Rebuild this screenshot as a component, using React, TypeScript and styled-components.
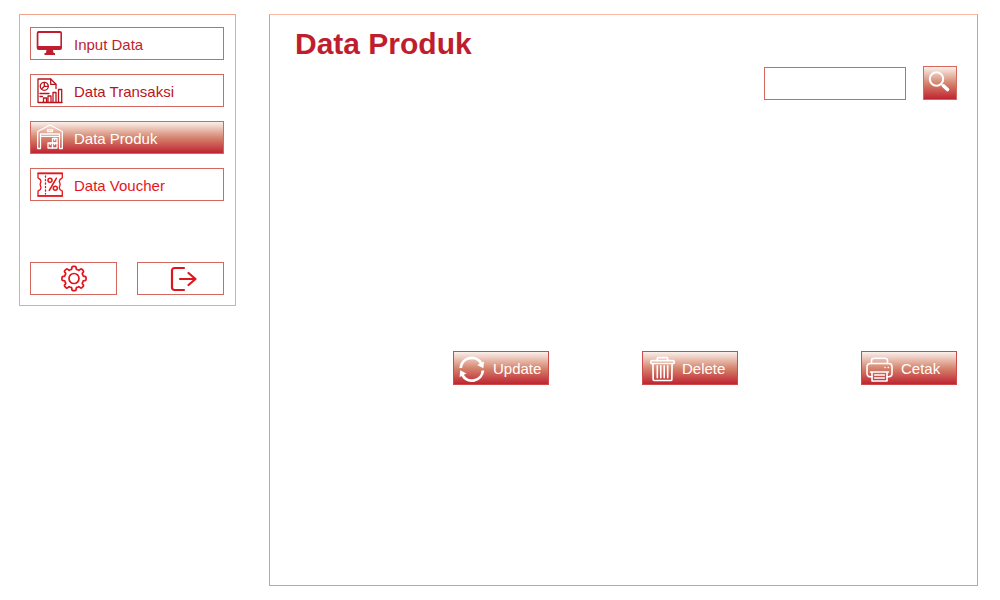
import React from "react";
import styled, { createGlobalStyle, css } from "styled-components";

const RED = "#be1e2d";
const GRADIENT = "linear-gradient(to bottom, #fdf7f3 0%, #d5866f 50%, #be1e2d 100%)";

const GlobalStyle = createGlobalStyle`
  *, *::before, *::after { box-sizing: border-box; }
  body {
    margin: 0;
    background: #ffffff;
    font-family: "Liberation Sans", Arial, sans-serif;
  }
`;

const Page = styled.div`
  display: grid;
  grid-template-columns: 217px minmax(0, 1fr);
  column-gap: 33px;
  align-items: start;
  min-height: 100vh;
  padding: 14px 22px 14px 19px;
`;

const Sidebar = styled.aside`
  padding: 12px 11px 10px 10px;
  border: 1px solid #f3a48e;
`;

const Menu = styled.nav`
  display: grid;
  row-gap: 14px;
  margin-bottom: 61px;
`;

const filled = css`
  background: ${GRADIENT} border-box;
  color: #ffffff;
`;

const MenuLink = styled.a<{ $color?: string; $active?: boolean }>`
  display: flex;
  align-items: center;
  gap: 10px;
  height: 33px;
  padding: 0 5px;
  border: 1px solid #d4685f;
  color: ${({ $color }) => $color ?? RED};
  font-size: 15px;
  line-height: 20px;
  text-decoration: none;
  ${({ $active }) => $active && filled}
`;

const MenuText = styled.span`
  padding-top: 2px;
`;

const SidebarTools = styled.div`
  display: grid;
  grid-template-columns: 1fr 1fr;
  column-gap: 20px;
`;

const ToolButton = styled.button`
  display: flex;
  align-items: center;
  justify-content: center;
  height: 33px;
  padding: 0;
  border: 1px solid #d4685f;
  background: #ffffff;
  color: #df141d;
  cursor: pointer;
`;

const Panel = styled.main`
  align-self: stretch;
  padding: 12px 20px 12px 25px;
  border: 1px solid #ee9480;
  border-top-color: #f9b9a5;
`;

const Title = styled.h1`
  margin: 0;
  color: ${RED};
  font-size: 30px;
  line-height: 34px;
  font-weight: 700;
`;

const SearchForm = styled.form`
  display: flex;
  justify-content: flex-end;
  align-items: flex-end;
  gap: 17px;
  margin-top: 5px;
`;

const SearchInput = styled.input`
  width: 142px;
  height: 33px;
  padding: 0 8px;
  border: 1px solid #d4685f;
  border-radius: 0;
  background: #ffffff;
  color: ${RED};
  font: inherit;
  font-size: 15px;
`;

const SearchButton = styled.button`
  display: flex;
  width: 34px;
  height: 34px;
  padding: 0;
  border: 1px solid #d4685f;
  cursor: pointer;
  ${filled}
`;

const Results = styled.section`
  min-height: 251px;
`;

const Actions = styled.div`
  display: flex;
  justify-content: space-between;
  padding-left: 158px;
`;

const ActionGroup = styled.div`
  display: flex;
  gap: 93px;
`;

const ActionButton = styled.button`
  display: flex;
  align-items: center;
  gap: 6px;
  width: 96px;
  height: 34px;
  padding: 0 5px;
  border: 1px solid #cf4a4a;
  font: inherit;
  font-size: 15px;
  line-height: 20px;
  cursor: pointer;
  ${filled}
`;

const ActionText = styled.span`
  padding-top: 2px;
`;

const Glyph = styled.svg`
  flex: none;
  overflow: visible;
  fill: none;
  stroke: currentColor;
  stroke-linecap: round;
  stroke-linejoin: round;
`;

type IconProps = { stroke?: number; children: React.ReactNode };

const Icon = ({ stroke = 1.3, children }: IconProps) => (
  <Glyph width="28" height="29" viewBox="0 0 28 29" strokeWidth={stroke} aria-hidden="true">
    {children}
  </Glyph>
);

const MonitorIcon = () => (
  <Icon>
    <path
      d="M2.700 2H24a2 2 0 0 1 2 2v15a2 2 0 0 1-2 2h-7l.6 3H19v2H8.500v-2h1.400l.6-3H2.700a2 2 0 0 1-2-2V4a2 2 0 0 1 2-2ZM3 4a.6.6 0 0 0-.6.6V17h22V4.600a.6.6 0 0 0-.6-.6Z"
      fill="currentColor"
      fillRule="evenodd"
      stroke="none"
    />
  </Icon>
);

const ReportIcon = () => (
  <Icon>
    <path d="M20 12.500V8.300L14.700 3H2v23.500h24" />
    <path d="M14.700 3v5.300H20" />
    <circle cx="8.300" cy="10.300" r="4" />
    <path d="M8.300 6.300v4h4M8.300 10.300l-2.800 2.800" />
    <path d="M4 17.500h9M4 20.500h2.500" />
    <path d="M7.500 26v-4h3v4M12 26v-6h3v6M17 26v-9.500h3V26M22.500 26V13.500h3.200V26" />
  </Icon>
);

const WarehouseIcon = () => (
  <Icon stroke={1.3}>
    <path d="M1.700 25.500V8.500L14 2 26.300 8.500v17h-2.800V11h-19V25.500Z" />
    <path d="M4.500 13.300h19" />
    <rect x="11.500" y="6.800" width="5" height="1.800" />
    <rect x="16.500" y="15.500" width="4.500" height="4.500" />
    <rect x="12" y="20" width="4.500" height="5" />
    <rect x="16.500" y="20" width="4.500" height="5" />
    <path d="M18.700 15.500v1.800M14.200 20v1.800M18.700 20v1.800" />
  </Icon>
);

const VoucherIcon = () => (
  <Icon>
    <path d="M2 3.500h24.300v4.300c-2 1-3 2.200-3 3.500 0 1 .8 1.600.8 3.200s-.8 2.200-.8 3.200c0 1.300 1 2.500 3 3.500v4.600H2v-4.600c2-1 3-2.200 3-3.500 0-1-.8-1.600-.8-3.200S5 12.300 5 11.300c0-1.300-1-2.500-3-3.500Z" />
    <path d="M2 3.300h24.300M2 26h24.300" strokeWidth="1.600" />
    <path d="M9.500 6v18" strokeDasharray="1.200 2.300" />
    <circle cx="14" cy="10.300" r="2" strokeWidth="1.500" />
    <circle cx="19.300" cy="18.300" r="2" strokeWidth="1.500" />
    <path d="M20.300 8.300l-7 12" strokeWidth="1.600" />
  </Icon>
);

const GEAR_TEETH = [0, 45, 90, 135, 180, 225, 270, 315];

/* One tooth spans 45 degrees: a flat rounded cap, two flanks and the scooped valley to the next tooth. */
const gearOutline = (() => {
  const at = (radius: number, degrees: number) => {
    const angle = (degrees * Math.PI) / 180;
    return `${(14 + radius * Math.cos(angle)).toFixed(2)} ${(14.5 + radius * Math.sin(angle)).toFixed(2)}`;
  };
  const parts = GEAR_TEETH.map(
    (a) =>
      `${at(11.2, a - 11)} Q${at(12.2, a - 9)} ${at(12.1, a - 5)} L${at(12.1, a + 5)} Q${at(12.2, a + 9)} ${at(11.2, a + 11)} ` +
      `Q${at(9.2, a + 13)} ${at(9.4, a + 18)} Q${at(9.9, a + 22.5)} ${at(9.4, a + 27)} Q${at(9.2, a + 32)} `
  );
  return `M${parts.join("")}${at(11.2, -11)}Z`;
})();

const GearIcon = () => (
  <Icon stroke={1.7}>
    <path d={gearOutline} />
    <circle cx="14" cy="14.500" r="5" />
  </Icon>
);

const LogoutIcon = () => (
  <Icon stroke={2.2}>
    <path d="M17 4H7.500A2.500 2.500 0 0 0 5 6.500v17A2.500 2.500 0 0 0 7.500 26H17" />
    <path d="M13 15h15.500M21.500 9l7 6-7 6" />
  </Icon>
);

const SearchIcon = () => (
  <Glyph width="32" height="32" viewBox="0 0 32 32" aria-hidden="true">
    <circle cx="12.500" cy="12" r="6.700" strokeWidth="2" />
    <path d="M17 17l3 3" strokeWidth="1.600" />
    <path d="M19.700 19l3.800 3.500" strokeWidth="3.600" />
  </Glyph>
);

const RefreshIcon = () => (
  <Icon stroke={2.8}>
    <path d="M1.700 14A11 11 0 0 1 22.300 9.500" strokeLinecap="butt" />
    <path d="M23.900 16.500A11 11 0 0 1 3.300 21" strokeLinecap="butt" />
    <path d="M25 7.500l-.6 6.800-6.300-3.200Z" fill="currentColor" stroke="none" />
    <path d="M.6 23l.6-6.800 6.300 3.200Z" fill="currentColor" stroke="none" />
  </Icon>
);

const TrashIcon = () => (
  <Icon stroke={1.7}>
    <path d="M9.300 6.500V4.700a1 1 0 0 1 1-1h8.400a1 1 0 0 1 1 1v1.800" />
    <rect x="2.800" y="6.700" width="23.400" height="2.800" rx="1" />
    <path d="M4.900 9.500l.3 16a1 1 0 0 0 1 1h16.600a1 1 0 0 0 1-1l.3-16" />
    <path d="M9.300 11.700v12M12.800 11.700v12M16.200 11.700v12M19.700 11.700v12" strokeWidth="1.600" />
  </Icon>
);

const PrinterIcon = () => (
  <Icon stroke={1.6}>
    <path d="M4.500 9.500V6.500a2.300 2.300 0 0 1 2.300-2.300h11.400a2.300 2.300 0 0 1 2.300 2.300v3" />
    <path d="M5 22.800H3.200A3.200 3.200 0 0 1 0 19.600v-6.900a3.200 3.200 0 0 1 3.200-3.200h18.600a3.200 3.200 0 0 1 3.200 3.200v6.900a3.200 3.200 0 0 1-3.200 3.200H20" />
    <path d="M3.500 18h18M5 18v9h15v-9" />
    <path d="M7.500 21h10M7.500 24h10" strokeWidth="1.300" />
    <path d="M18 13.500h.1M21.300 13.500h.1" />
  </Icon>
);

const menu = [
  { label: "Input Data", icon: <MonitorIcon />, color: RED },
  { label: "Data Transaksi", icon: <ReportIcon />, color: "#b9141d" },
  { label: "Data Produk", icon: <WarehouseIcon />, active: true },
  { label: "Data Voucher", icon: <VoucherIcon />, color: "#e4151b" },
];

export default function App() {
  return (
    <>
      <GlobalStyle />
      <Page>
        <Sidebar>
          <Menu aria-label="Menu">
            {menu.map(({ label, icon, color, active }) => (
              <MenuLink
                key={label}
                href="#"
                $color={color}
                $active={active}
                aria-current={active ? "page" : undefined}
              >
                {icon}
                <MenuText>{label}</MenuText>
              </MenuLink>
            ))}
          </Menu>
          <SidebarTools>
            <ToolButton type="button" aria-label="Pengaturan">
              <GearIcon />
            </ToolButton>
            <ToolButton type="button" aria-label="Keluar">
              <LogoutIcon />
            </ToolButton>
          </SidebarTools>
        </Sidebar>

        <Panel>
          <Title>Data Produk</Title>
          <SearchForm role="search" onSubmit={(e) => e.preventDefault()}>
            <SearchInput type="text" aria-label="Cari produk" />
            <SearchButton type="submit" aria-label="Cari">
              <SearchIcon />
            </SearchButton>
          </SearchForm>
          <Results aria-label="Daftar produk" />
          <Actions>
            <ActionGroup>
              <ActionButton type="button">
                <RefreshIcon />
                <ActionText>Update</ActionText>
              </ActionButton>
              <ActionButton type="button">
                <TrashIcon />
                <ActionText>Delete</ActionText>
              </ActionButton>
            </ActionGroup>
            <ActionButton type="button">
              <PrinterIcon />
              <ActionText>Cetak</ActionText>
            </ActionButton>
          </Actions>
        </Panel>
      </Page>
    </>
  );
}
